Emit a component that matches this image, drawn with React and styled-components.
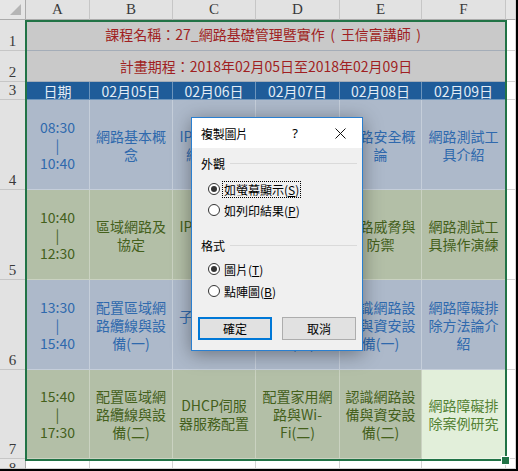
import React from 'react';
import styled, { createGlobalStyle, css } from 'styled-components';

const Global = createGlobalStyle`
  html, body { margin: 0; padding: 0; background: #fff; }
  body { font-family: "Noto Sans CJK TC", "Noto Sans", sans-serif; }
  * { box-sizing: border-box; }
`;

const Frame = styled.div`
  position: relative;
  width: 518px;
  height: 471px;
  border-right: 2px solid #000;
  border-bottom: 2px solid #000;
  overflow: hidden;
  background: #fff;
`;

const Sheet = styled.div`
  display: grid;
  grid-template-columns: 26px 64px 83px 83px 84px 82px 84px 10px;
  grid-template-rows: 20px 31px 31px 18px 90px 90px 90px 89px 10px;
`;

const headBase = css`
  background: #e6e6e6;
  color: #3a3a3a;
  font-family: "Liberation Serif", "DejaVu Serif", serif;
  font-size: 15px;
  overflow: hidden;
`;

const Corner = styled.div`
  ${headBase};
  display: flex;
  align-items: flex-end;
  justify-content: flex-end;
  padding: 0 4px 4px 0;
  border-right: 1px solid #ababab;
  border-bottom: 1px solid #ababab;
  &::after {
    content: '';
    width: 11px;
    height: 11px;
    background: #b5b5b5;
    clip-path: polygon(100% 0, 100% 100%, 0 100%);
  }
`;

const ColHead = styled.div`
  ${headBase};
  display: flex;
  align-items: center;
  justify-content: center;
  border-right: 1px solid ${p => (p.$active ? '#c6c6c6' : '#d0d0d0')};
  border-bottom: 1px solid #ababab;
  background: ${p => (p.$active ? '#e2e2e2' : '#e6e6e6')};
`;

const RowHead = styled.div`
  ${headBase};
  display: flex;
  align-items: ${p => (p.$top ? 'flex-start' : 'flex-end')};
  justify-content: center;
  padding: ${p => (p.$top ? '1px 0 0' : '0 0 1px')};
  line-height: 16px;
  border-right: 1px solid #ababab;
  border-bottom: 1px solid #c6c6c6;
  background: ${p => (p.$active ? '#e2e2e2' : '#e6e6e6')};
`;

const TitleCell = styled.div`
  grid-column: span 6;
  display: flex;
  align-items: center;
  justify-content: center;
  background: #c9c9c9;
  color: #a01f22;
  font-size: 14px;
  line-height: 18px;
  padding-bottom: ${p => p.$raise || 0}px;
  border-bottom: 1px solid #a4adb8;
  white-space: nowrap;
`;

const Paren = styled.span`
  display: inline-block;
  width: 16px;
  text-align: center;
`;

const HeadCell = styled.div`
  display: flex;
  align-items: center;
  justify-content: center;
  background: #1f5c99;
  color: #e4ecf5;
  font-size: 14px;
  line-height: 16px;
  border-right: 1px solid rgba(255, 255, 255, 0.35);
  border-bottom: 1px solid rgba(255, 255, 255, 0.35);
  white-space: nowrap;
`;

const variants = {
  blue: css`
    background: #adb9ca;
    color: #2f69ad;
  `,
  green: css`
    background: #b3bfa7;
    color: #44601b;
  `,
  active: css`
    background: #e2efda;
    color: #548235;
  `,
};

const DataCell = styled.div`
  display: flex;
  align-items: center;
  justify-content: center;
  text-align: center;
  white-space: pre-line;
  font-size: 14px;
  line-height: 18px;
  padding: 0 2px;
  border-right: 1px solid rgba(255, 255, 255, 0.3);
  border-bottom: 1px solid rgba(255, 255, 255, 0.3);
  overflow: hidden;
  ${p => variants[p.$variant]};
`;

const Blank = styled.div`
  background: #fff;
  border-right: 1px solid #d4d4d4;
  border-bottom: 1px solid #d4d4d4;
`;

const Selection = styled.div`
  position: absolute;
  left: 25px;
  top: 20px;
  width: 482px;
  height: 441px;
  border: 2px solid #217346;
  pointer-events: none;
`;

const FillHandle = styled.div`
  position: absolute;
  left: 502px;
  top: 457px;
  width: 7px;
  height: 7px;
  background: #217346;
  box-shadow: 0 0 0 1px #fff;
`;

/* ---------- dialog ---------- */

const Dialog = styled.div`
  position: absolute;
  left: 191px;
  top: 117px;
  width: 172px;
  height: 234px;
  border: 1px solid #2a7fd0;
  background: #f0f0f0;
  box-shadow: 0 3px 18px rgba(0, 0, 0, 0.38);
  display: flex;
  flex-direction: column;
  font-size: 12px;
  color: #000;
`;

const TitleBar = styled.div`
  height: 30px;
  flex: none;
  background: #fff;
  display: flex;
  align-items: center;
`;

const TitleText = styled.div`
  flex: 1;
  padding-left: 9px;
  font-size: 12px;
  letter-spacing: -0.3px;
`;

const TitleButton = styled.div`
  width: ${p => p.$w}px;
  height: 100%;
  display: flex;
  align-items: center;
  justify-content: center;
  font-family: "Noto Sans", "DejaVu Sans", sans-serif;
  font-size: 13px;
`;

const Body = styled.div`
  flex: 1;
  display: flex;
  flex-direction: column;
  padding: 7px 5px 0 6px;
`;

const GroupHeader = styled.div`
  height: 16px;
  margin-top: ${p => p.$mt}px;
  display: flex;
  align-items: center;
  padding-left: 3px;
  &::after {
    content: '';
    flex: 1;
    height: 1px;
    margin-left: 5px;
    background: #dadada;
  }
`;

const RadioRow = styled.div`
  height: 18px;
  margin-top: ${p => p.$mt}px;
  display: flex;
  align-items: center;
  padding-left: 10px;
`;

const RadioCircle = styled.span`
  width: 12px;
  height: 12px;
  border-radius: 50%;
  border: 1px solid #333;
  background: #fff;
  display: flex;
  align-items: center;
  justify-content: center;
  flex: none;
  &::after {
    content: '';
    width: 6px;
    height: 6px;
    border-radius: 50%;
    background: ${p => (p.$checked ? '#333' : 'transparent')};
  }
`;

const RadioLabel = styled.span`
  margin-left: 2px;
  padding: 0 1px;
  border: 1px dotted ${p => (p.$focus ? '#000' : 'transparent')};
  line-height: 15px;
  white-space: nowrap;
  u { text-decoration: underline; }
`;

const ButtonRow = styled.div`
  margin-top: 17px;
  display: flex;
  gap: 10px;
`;

const Button = styled.div`
  width: 74px;
  height: 23px;
  display: flex;
  align-items: center;
  justify-content: center;
  background: #e1e1e1;
  border: ${p => (p.$primary ? '2px solid #0078d7' : '1px solid #adadad')};
  font-size: 12px;
`;

const CloseIcon = () => (
  <svg width="11" height="11" viewBox="0 0 11 11">
    <path d="M0.5 0.5 L10.5 10.5 M10.5 0.5 L0.5 10.5" stroke="#111" strokeWidth="1" fill="none" />
  </svg>
);

const Radio = ({ checked, focus, text, key2 }) => (
  <>
    <RadioCircle $checked={checked} />
    <RadioLabel $focus={focus}>
      {text}(<u>{key2}</u>)
    </RadioLabel>
  </>
);

const rows = [
  {
    n: '4',
    v: 'blue',
    cells: [
      '08:30\n|\n10:40',
      '網路基本概\n念',
      'IP位址與子\n網路規劃',
      '網路設備與\n拓樸',
      '網路安全概\n論',
      '網路測試工\n具介紹',
    ],
  },
  {
    n: '5',
    v: 'green',
    cells: [
      '10:40\n|\n12:30',
      '區域網路及\n協定',
      'IP路由與網\n域名稱',
      '網路服務與\n應用',
      '網路威脅與\n防禦',
      '網路測試工\n具操作演練',
    ],
  },
  {
    n: '6',
    v: 'blue',
    cells: [
      '13:30\n|\n15:40',
      '配置區域網\n路纜線與設\n備(一)',
      '子網路切割\n與規劃',
      '配置家用網\n路與Wi-\nFi(一)',
      '認識網路設\n備與資安設\n備(一)',
      '網路障礙排\n除方法論介\n紹',
    ],
  },
  {
    n: '7',
    v: 'green',
    cells: [
      '15:40\n|\n17:30',
      '配置區域網\n路纜線與設\n備(二)',
      'DHCP伺服\n器服務配置',
      '配置家用網\n路與Wi-\nFi(二)',
      '認識網路設\n備與資安設\n備(二)',
      '網路障礙排\n除案例研究',
    ],
    activeLast: true,
  },
];

const cols = ['A', 'B', 'C', 'D', 'E', 'F'];
const days = ['日期', '02月05日', '02月06日', '02月07日', '02月08日', '02月09日'];

export default function App() {
  return (
    <>
      <Global />
      <Frame>
        <Sheet>
          <Corner />
          {cols.map(c => (
            <ColHead key={c} $active>
              {c}
            </ColHead>
          ))}
          <ColHead />

          <RowHead $active>1</RowHead>
          <TitleCell $raise={2}>
            課程名稱：27_網路基礎管理暨實作<Paren>(</Paren>王信富講師<Paren>)</Paren>
          </TitleCell>
          <Blank />

          <RowHead $active>2</RowHead>
          <TitleCell>計畫期程：2018年02月05日至2018年02月09日</TitleCell>
          <Blank />

          <RowHead $active>3</RowHead>
          {days.map(d => (
            <HeadCell key={d}>{d}</HeadCell>
          ))}
          <Blank />

          {rows.map(r => (
            <React.Fragment key={r.n}>
              <RowHead $active>{r.n}</RowHead>
              {r.cells.map((t, i) => (
                <DataCell
                  key={i}
                  $variant={r.activeLast && i === r.cells.length - 1 ? 'active' : r.v}
                >
                  {t}
                </DataCell>
              ))}
              <Blank />
            </React.Fragment>
          ))}

          <RowHead $top>8</RowHead>
          {cols.map(c => (
            <Blank key={c} />
          ))}
          <Blank />
        </Sheet>

        <Selection />
        <FillHandle />

        <Dialog>
          <TitleBar>
            <TitleText>複製圖片</TitleText>
            <TitleButton $w={46}>?</TitleButton>
            <TitleButton $w={44}>
              <CloseIcon />
            </TitleButton>
          </TitleBar>
          <Body>
            <GroupHeader $mt={0}>外觀</GroupHeader>
            <RadioRow $mt={9}>
              <Radio checked focus text="如螢幕顯示" key2="S" />
            </RadioRow>
            <RadioRow $mt={3}>
              <Radio text="如列印結果" key2="P" />
            </RadioRow>
            <GroupHeader $mt={18}>格式</GroupHeader>
            <RadioRow $mt={7}>
              <Radio checked text="圖片" key2="T" />
            </RadioRow>
            <RadioRow $mt={4}>
              <Radio text="點陣圖" key2="B" />
            </RadioRow>
            <ButtonRow>
              <Button $primary>確定</Button>
              <Button>取消</Button>
            </ButtonRow>
          </Body>
        </Dialog>
      </Frame>
    </>
  );
}
